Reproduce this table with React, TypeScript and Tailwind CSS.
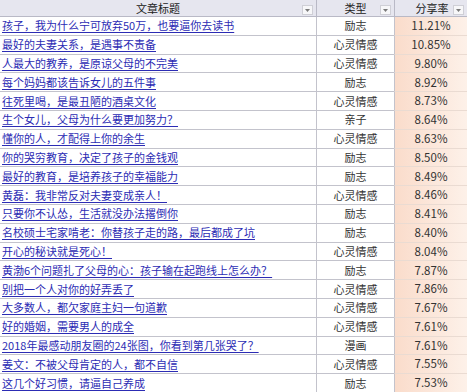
import React from 'react';

// 文章分享率排行（表格截图）
const rows: [string, string, string][] = [
  ['孩子，我为什么宁可放弃50万，也要逼你去读书', '励志', '11.21%'],
  ['最好的夫妻关系，是遇事不责备', '心灵情感', '10.85%'],
  ['人最大的教养，是原谅父母的不完美', '心灵情感', '9.80%'],
  ['每个妈妈都该告诉女儿的五件事', '励志', '8.92%'],
  ['往死里喝，是最丑陋的酒桌文化', '心灵情感', '8.73%'],
  ['生个女儿，父母为什么要更加努力？', '亲子', '8.64%'],
  ['懂你的人，才配得上你的余生', '心灵情感', '8.63%'],
  ['你的哭穷教育，决定了孩子的金钱观', '励志', '8.50%'],
  ['最好的教育，是培养孩子的幸福能力', '励志', '8.49%'],
  ['黄磊：我非常反对夫妻变成亲人！', '心灵情感', '8.46%'],
  ['只要你不认怂，生活就没办法撂倒你', '励志', '8.41%'],
  ['名校硕士宅家啃老：你替孩子走的路，最后都成了坑', '励志', '8.40%'],
  ['开心的秘诀就是死心！', '心灵情感', '8.04%'],
  ['黄渤6个问题扎了父母的心：孩子输在起跑线上怎么办？', '励志', '7.87%'],
  ['别把一个人对你的好弄丢了', '心灵情感', '7.86%'],
  ['大多数人，都欠家庭主妇一句道歉', '心灵情感', '7.67%'],
  ['好的婚姻，需要男人的成全', '心灵情感', '7.61%'],
  ['2018年最感动朋友圈的24张图，你看到第几张哭了？', '漫画', '7.61%'],
  ['姜文：不被父母肯定的人，都不自信', '心灵情感', '7.55%'],
  ['这几个好习惯，请逼自己养成', '励志', '7.53%'],
];

function FilterButton() {
  return (
    <span className="absolute right-[3px] top-[5px] w-[11px] h-[10px] border border-[#cfcfd6] bg-[#f7f7f9] flex items-center justify-center">
      <svg width="5" height="3" viewBox="0 0 5 3">
        <path d="M0 0h5L2.5 3z" fill="#7a7a7a" />
      </svg>
    </span>
  );
}

export default function App() {
  return (
    <div
      className="w-[467px] h-[392px] overflow-hidden bg-white text-[11px] text-[#333]"
      style={{ fontFamily: '"Noto Sans CJK SC", "Noto Sans", sans-serif' }}
    >
      <div className="grid grid-cols-[316px_78px_73px]">
        {/* 表头 */}
        <div className="relative h-[17px] bg-[#e6e6ef] border-b border-[#b9b9c6] flex items-center justify-center text-[#222] leading-none">
          文章标题
          <FilterButton />
        </div>
        <div className="relative h-[17px] bg-[#e6e6ef] border-b border-l border-[#b9b9c6] flex items-center justify-center text-[#222] leading-none">
          类型
          <FilterButton />
        </div>
        <div className="relative h-[17px] bg-[#e6e6ef] border-b border-l border-[#b9b9c6] flex items-center justify-center pl-[2px] text-[#222] leading-none">
          分享率
          <FilterButton />
        </div>

        {rows.map(([title, type, rate], i) => (
          <React.Fragment key={i}>
            <div className="h-[18.8px] border-b border-[#c3c3cc] flex items-center pl-[2px] whitespace-nowrap overflow-hidden leading-none">
              <span className="text-[#2c2cb4] underline underline-offset-2 decoration-[#2c2cb4]">{title}</span>
            </div>
            <div className="h-[18.8px] border-b border-l border-[#c3c3cc] flex items-center justify-center leading-none">
              {type}
            </div>
            <div className="h-[18.8px] border-b border-l border-b-[#eadbd2] border-l-[#c3c3cc] bg-gradient-to-r from-[#fadccb] to-[#fdf1e9] flex items-center justify-center text-[11.5px] leading-none">
              {rate}
            </div>
          </React.Fragment>
        ))}
      </div>
    </div>
  );
}
